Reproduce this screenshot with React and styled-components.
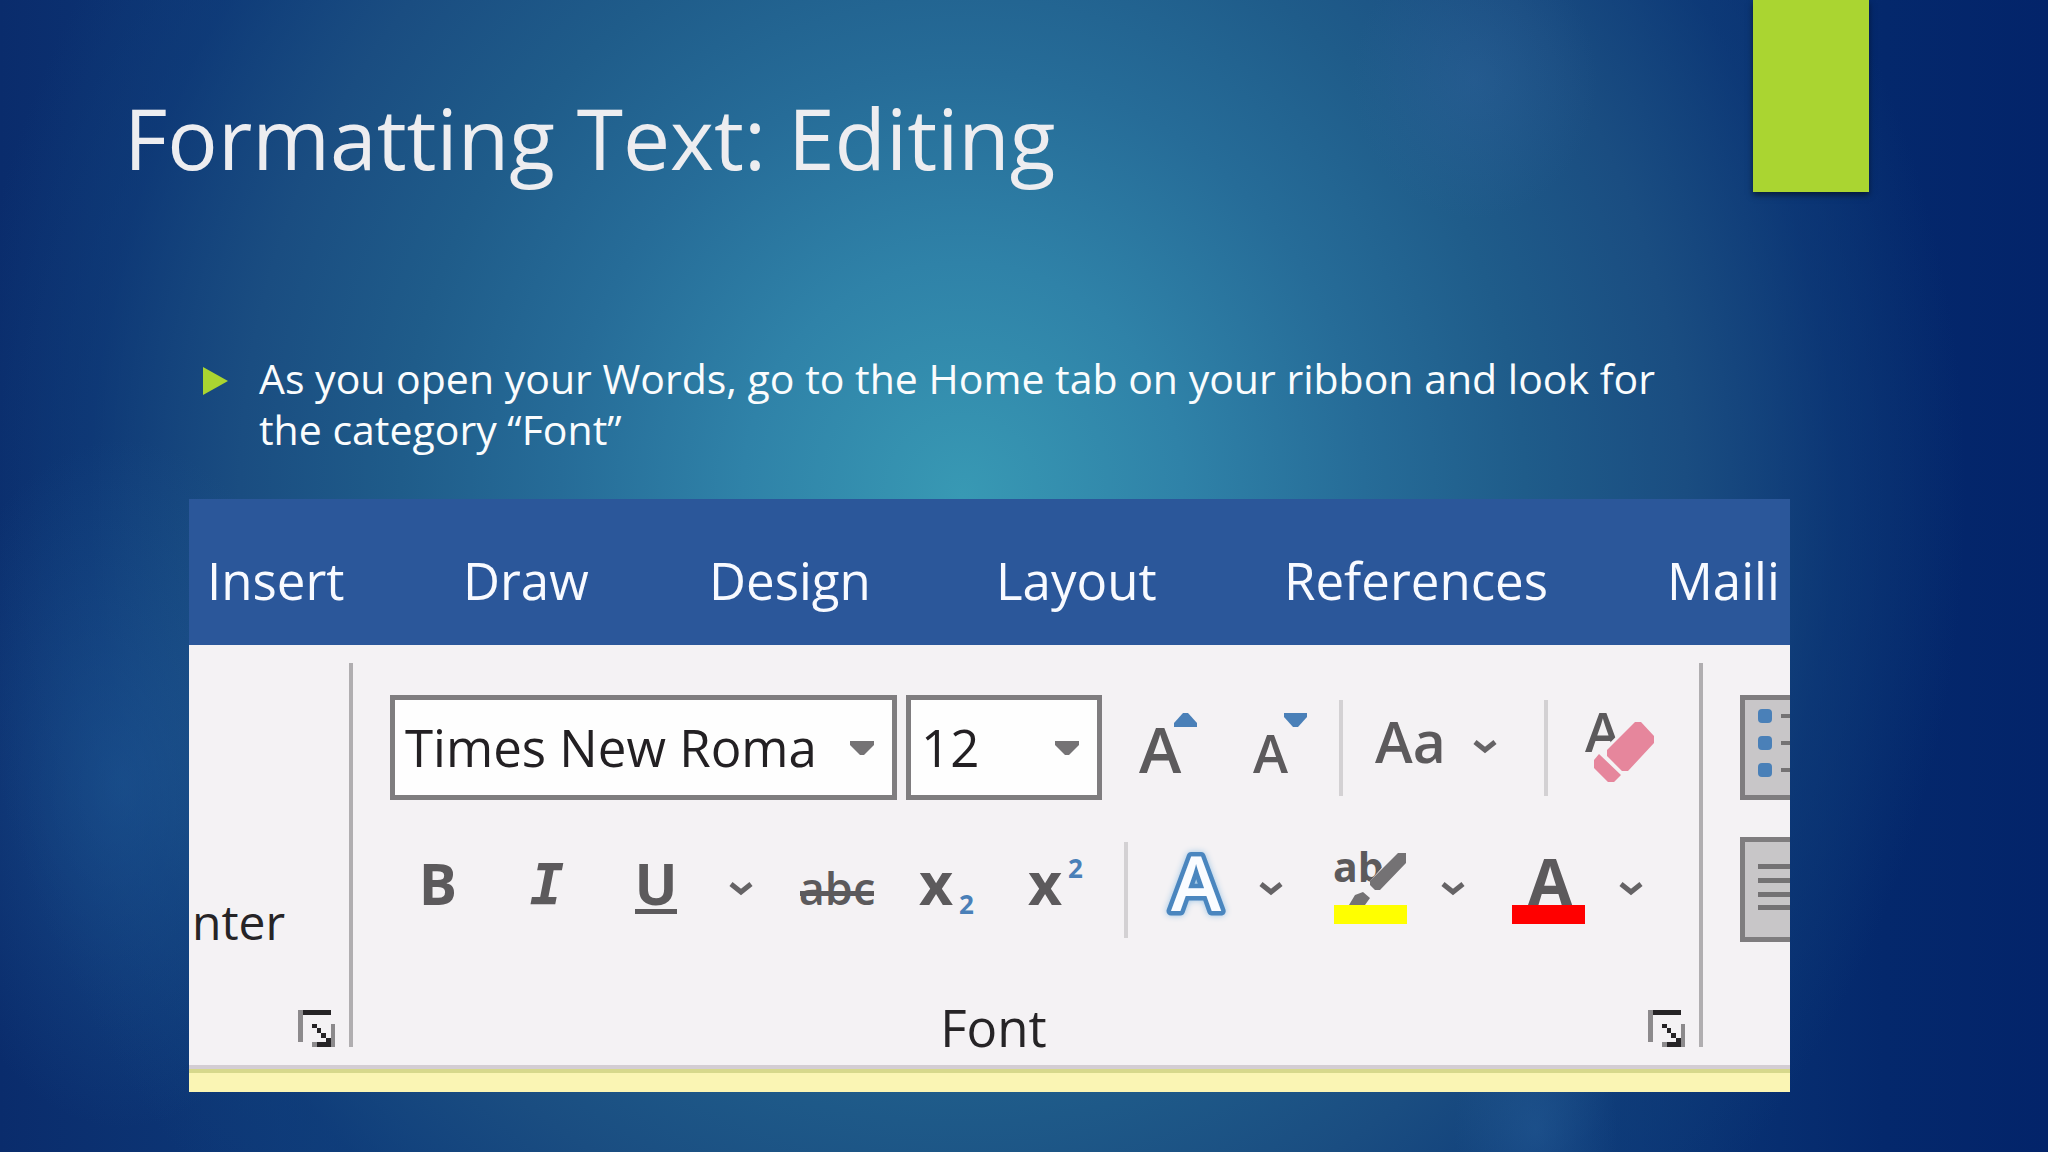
import React from "react";
import styled, { createGlobalStyle } from "styled-components";

const GlobalStyle = createGlobalStyle`
  *, *::before, *::after { box-sizing: border-box; }
  body {
    margin: 0;
    font-family: "Open Sans", "Noto Sans", sans-serif;
    background: #05286c;
  }
`;

const Slide = styled.main`
  min-height: 100vh;
  display: flex;
  flex-direction: column;
  overflow: hidden;
  background:
    radial-gradient(ellipse 6% 12% at 72% 7%, rgba(60, 110, 170, 0.25), transparent),
    radial-gradient(ellipse 10% 30% at 6% 68%, rgba(40, 105, 165, 0.4), transparent),
    radial-gradient(ellipse 4% 10% at 75% 98%, rgba(50, 110, 170, 0.3), transparent),
    radial-gradient(ellipse 49% 92% at 47% 43%, #3899b4 0%, #2f82a8 22%, #266c98 40%, #1f5c8a 56%, #1a4d81 72%, rgba(16, 62, 122, 0.6) 87%, transparent 100%),
    linear-gradient(90deg, #0a2c6c 0%, #0f3f7e 20%, #0e3c7a 75%, #04286c 92%, #03246a 100%);
`;

const Header = styled.header`
  display: flex;
  justify-content: space-between;
  align-items: flex-start;
  padding: 0 179px 0 124px;
`;

const Title = styled.h1`
  margin: 0;
  padding-top: 84px;
  font-size: 84px;
  line-height: 108px;
  font-weight: 400;
  color: #ededf0;
`;

const Accent = styled.div`
  flex: none;
  width: 116px;
  height: 192px;
  background: #aad531;
  box-shadow: 0 3px 6px rgba(0, 0, 0, 0.5);
`;

const Points = styled.ul`
  list-style: none;
  margin: 0;
  padding: 161px 350px 44px 203px;
`;

const Point = styled.li`
  display: flex;
  align-items: flex-start;
  gap: 31px;
  font-size: 41px;
  line-height: 51px;
  color: #fafcfd;
`;

const Marker = styled.svg`
  flex: none;
  width: 25px;
  height: 51px;
  fill: #aad531;
`;

const Ribbon = styled.section`
  margin: 0 258px 60px 189px;
  overflow: hidden;
  background: #f4f2f4;
`;

const Tabs = styled.nav`
  display: flex;
  height: 146px;
  padding: 46px 0 0 16px;
  background: #2b579a;
`;

const Tab = styled.a`
  flex: none;
  width: ${(p) => p.$width}px;
  padding-left: 2px;
  font-size: 51px;
  line-height: 70px;
  color: #f8faff;
  text-decoration: none;
  white-space: nowrap;
`;

const Groups = styled.div`
  display: flex;
  padding: 18px 0;
`;

const Group = styled.div`
  display: flex;
  flex-direction: column;
  justify-content: space-between;
  height: 384px;
  padding-top: 32px;
`;

const ClipboardGroup = styled(Group)`
  flex: none;
  width: 160px;
  padding: 224px 13px 0 3px;
`;

const FontGroup = styled(Group)`
  flex: 1;
  min-width: 0;
  padding-right: 13px;
`;

const ParagraphGroup = styled(Group)`
  flex: none;
  width: 87px;
  padding-left: 37px;
  justify-content: flex-start;
  gap: 37px;
`;

const Divider = styled.div`
  flex: none;
  width: 4px;
  height: 384px;
  background: #b0aeb0;
`;

const PainterButton = styled.button`
  border: 0;
  padding: 0;
  background: none;
  font: inherit;
  font-size: 48px;
  line-height: 70px;
  text-align: left;
  color: #262426;
`;

const Rows = styled.div`
  display: flex;
  flex-direction: column;
  gap: 37px;
`;

const Row = styled.div`
  display: flex;
  align-items: center;
  height: 105px;
  padding-left: ${(p) => p.$inset}px;
`;

const Field = styled.label`
  position: relative;
  flex: none;
  width: ${(p) => p.$width}px;
  height: 105px;
  margin-right: ${(p) => p.$gap}px;
`;

const Select = styled.select`
  appearance: none;
  width: 100%;
  height: 100%;
  padding: 0 0 2px 10px;
  border: 5px solid #7f7d7f;
  border-radius: 0;
  background: #fefefe;
  font-family: inherit;
  font-size: 51px;
  color: #232023;
`;

const FieldArrow = styled.svg`
  position: absolute;
  top: 46px;
  right: 23px;
  width: 24px;
  height: 14px;
  fill: #757375;
  pointer-events: none;
`;

const Separator = styled.div`
  flex: none;
  width: 4px;
  height: 96px;
  margin: 0 9px;
  background: #d3d1d3;
`;

const Tool = styled.button`
  flex: none;
  display: block;
  width: ${(p) => p.$width}px;
  height: 105px;
  padding: 0;
  border: 0;
  background: none;
  color: #5c5a5c;

  svg {
    display: block;
    fill: currentColor;
    font-family: "Open Sans", sans-serif;
  }
`;

const OutlinedLetter = styled.text`
  font-size: 76px;
  font-weight: 600;
  text-anchor: middle;
  fill: #fafcff;
  stroke: #4a86bf;
  stroke-width: 9px;
  stroke-linejoin: round;
  paint-order: stroke;
  filter: drop-shadow(0 0 3px #9cc4e4);
`;

const Footer = styled.div`
  display: flex;
  justify-content: flex-end;
  align-items: flex-end;
`;

const GroupName = styled.div`
  flex: 1;
  height: 50px;
  padding-right: 14px;
  font-size: 51px;
  line-height: 60px;
  text-align: center;
  color: #262426;
`;

const Launcher = styled.button`
  flex: none;
  width: 38px;
  height: 37px;
  padding: 0;
  border: 0;
  background: none;

  svg { display: block; }
`;

const PressedTool = styled.button`
  flex: none;
  width: 105px;
  height: 105px;
  padding: 0;
  border: 5px solid #7f7d7f;
  background: #c8c6c8;

  svg { display: block; }
`;

const StatusEdge = styled.div`
  height: 27px;
  border-top: 4px solid #d3cdd3;
  background: linear-gradient(#d6d88c 4px, #faf5b4 4px);
`;

const Chevron = ({ x }) => (
  <path d={`M${x - 10} 47 L${x} 55 L${x + 10} 47`} fill="none" stroke="#656365" strokeWidth="5" />
);

function IconTool({ label, width, children }) {
  return (
    <Tool type="button" aria-label={label} $width={width}>
      <svg width={width} height="105" viewBox={`0 0 ${width} 105`} aria-hidden="true">
        {children}
      </svg>
    </Tool>
  );
}

function Picker({ label, value, width, gap }) {
  return (
    <Field $width={width} $gap={gap}>
      <Select aria-label={label} defaultValue={value}>
        <option>{value}</option>
      </Select>
      <FieldArrow viewBox="0 0 24 14" aria-hidden="true">
        <path d="M0 0H24V4L14 14H10L0 4Z" />
      </FieldArrow>
    </Field>
  );
}

function DialogLauncher({ label }) {
  return (
    <Launcher type="button" aria-label={label}>
      <svg width="38" height="37" viewBox="0 0 38 37" aria-hidden="true">
        <path d="M0 0H5V32H0Z M33 14H37V37H33Z M14 32H19V37H14Z" fill="#8c8a8c" />
        <path d="M5 0H33V5H5Z M19 32H33V37H19Z M28 28H33V32H28Z M14 14H19V18H14Z M19 18H23V23H19Z M23 23H28V28H23Z" fill="#262426" />
      </svg>
    </Launcher>
  );
}

const TABS = [
  ["Insert", 256],
  ["Draw", 246],
  ["Design", 287],
  ["Layout", 288],
  ["References", 383],
  ["Maili", 125],
];

export default function App() {
  return (
    <>
      <GlobalStyle />
      <Slide>
        <Header>
          <Title>Formatting Text: Editing</Title>
          <Accent />
        </Header>

        <Points>
          <Point>
            <Marker viewBox="0 0 25 51" aria-hidden="true">
              <path d="M0 14L25 28L0 42Z" />
            </Marker>
            <span>
              As you open your Words, go to the Home tab on your ribbon and look for
              <br />
              the category “Font”
            </span>
          </Point>
        </Points>

        <Ribbon>
          <Tabs>
            {TABS.map(([name, width]) => (
              <Tab key={name} href="#" $width={width}>{name}</Tab>
            ))}
          </Tabs>

          <Groups>
            <ClipboardGroup>
              <PainterButton type="button">nter</PainterButton>
              <Footer><DialogLauncher label="Clipboard settings" /></Footer>
            </ClipboardGroup>

            <Divider />

            <FontGroup>
              <Rows>
                <Row $inset={37}>
                  <Picker label="Font name" value="Times New Roma" width={507} gap={9} />
                  <Picker label="Font size" value="12" width={196} gap={0} />
                  <IconTool label="Increase font size" width={114}>
                    <text x="37" y="78" fontSize="64" fontWeight="600">A</text>
                    <path d="M72 32V28L81 18H86L95 28V32Z" fill="#4a80b8" />
                  </IconTool>
                  <IconTool label="Decrease font size" width={114}>
                    <text x="37" y="78" fontSize="53" fontWeight="600">A</text>
                    <path d="M68 18H91V22L82 32H77L68 22Z" fill="#4a80b8" />
                  </IconTool>
                  <Separator />
                  <IconTool label="Change case" width={183}>
                    <text x="23" y="68" fontSize="57" fontWeight="600">Aa</text>
                    <Chevron x={133} />
                  </IconTool>
                  <Separator />
                  <IconTool label="Clear formatting" width={114}>
                    <text x="28" y="57" fontSize="54" fontWeight="600">A</text>
                    <path d="M78 27H84L97 41V48L71 76H65L50 61V55Z M42 59L64 80L57 87H51L37 73V65Z" fill="#f4f2f4" stroke="#f4f2f4" strokeWidth="6" />
                    <path d="M78 27H84L97 41V48L71 76H65L50 61V55Z M42 59L64 80L57 87H51L37 73V65Z" fill="#e6869c" />
                  </IconTool>
                </Row>

                <Row $inset={30}>
                  <IconTool label="Bold" width={109}>
                    <text x="55" y="68" fontSize="57" fontWeight="700" textAnchor="middle">B</text>
                  </IconTool>
                  <IconTool label="Italic" width={109}>
                    <text x="55" y="68" fontSize="57" fontStyle="italic" fontWeight="700" fontFamily="DejaVu Sans Mono" textAnchor="middle">I</text>
                  </IconTool>
                  <IconTool label="Underline" width={109}>
                    <text x="55" y="68" fontSize="57" fontWeight="700" textAnchor="middle">U</text>
                    <rect x="34" y="72" width="42" height="5" />
                  </IconTool>
                  <IconTool label="Underline style" width={62}>
                    <Chevron x={31} />
                  </IconTool>
                  <IconTool label="Strikethrough" width={130}>
                    <text x="65" y="68" fontSize="45" fontWeight="600" textAnchor="middle">abc</text>
                    <rect x="28" y="54" width="74" height="5" />
                  </IconTool>
                  <IconTool label="Subscript" width={108}>
                    <text x="17" y="68" fontSize="59" fontWeight="700">x</text>
                    <text x="57" y="77" fontSize="26" fontWeight="700" fill="#4a80b8">2</text>
                  </IconTool>
                  <IconTool label="Superscript" width={105}>
                    <text x="18" y="68" fontSize="59" fontWeight="700">x</text>
                    <text x="58" y="41" fontSize="26" fontWeight="700" fill="#4a80b8">2</text>
                  </IconTool>
                  <Separator />
                  <IconTool label="Text effects" width={167}>
                    <OutlinedLetter x="59" y="74">A</OutlinedLetter>
                    <Chevron x={134} />
                  </IconTool>
                  <IconTool label="Highlight colour" width={178}>
                    <text x="29" y="45" fontSize="41" fontWeight="700">ab</text>
                    <path d="M97 21L68 54" fill="none" stroke="#f4f2f4" strokeWidth="16" />
                    <path d="M94 16H102V26L76 53H71L66 48V44Z M59 55L66 61L61 68H45L51 58Z" fill="#747274" />
                    <rect x="30" y="68" width="73" height="19" fill="#ffff00" />
                    <Chevron x={149} />
                  </IconTool>
                  <IconTool label="Font colour" width={178}>
                    <text x="68" y="68" fontSize="64" fontWeight="700" textAnchor="middle">A</text>
                    <rect x="30" y="68" width="73" height="19" fill="#ff0000" />
                    <Chevron x={149} />
                  </IconTool>
                </Row>
              </Rows>
              <Footer>
                <GroupName>Font</GroupName>
                <DialogLauncher label="Font settings" />
              </Footer>
            </FontGroup>

            <Divider />

            <ParagraphGroup>
              <PressedTool type="button" aria-label="Bullets">
                <svg width="95" height="95" viewBox="0 0 95 95" aria-hidden="true">
                  {[9, 36, 63].map((y) => (
                    <g key={y}>
                      <rect x="13" y={y} width="14" height="14" rx="4" fill="#4a80b8" />
                      <rect x="36" y={y + 5} width="46" height="4" fill="#747274" />
                    </g>
                  ))}
                </svg>
              </PressedTool>
              <PressedTool type="button" aria-label="Align left">
                <svg width="95" height="95" viewBox="0 0 95 95" aria-hidden="true">
                  {[22, 36, 50, 63].map((y) => (
                    <rect key={y} x="13" y={y} width="69" height="5" fill="#747274" />
                  ))}
                </svg>
              </PressedTool>
            </ParagraphGroup>
          </Groups>
          <StatusEdge />
        </Ribbon>
      </Slide>
    </>
  );
}
